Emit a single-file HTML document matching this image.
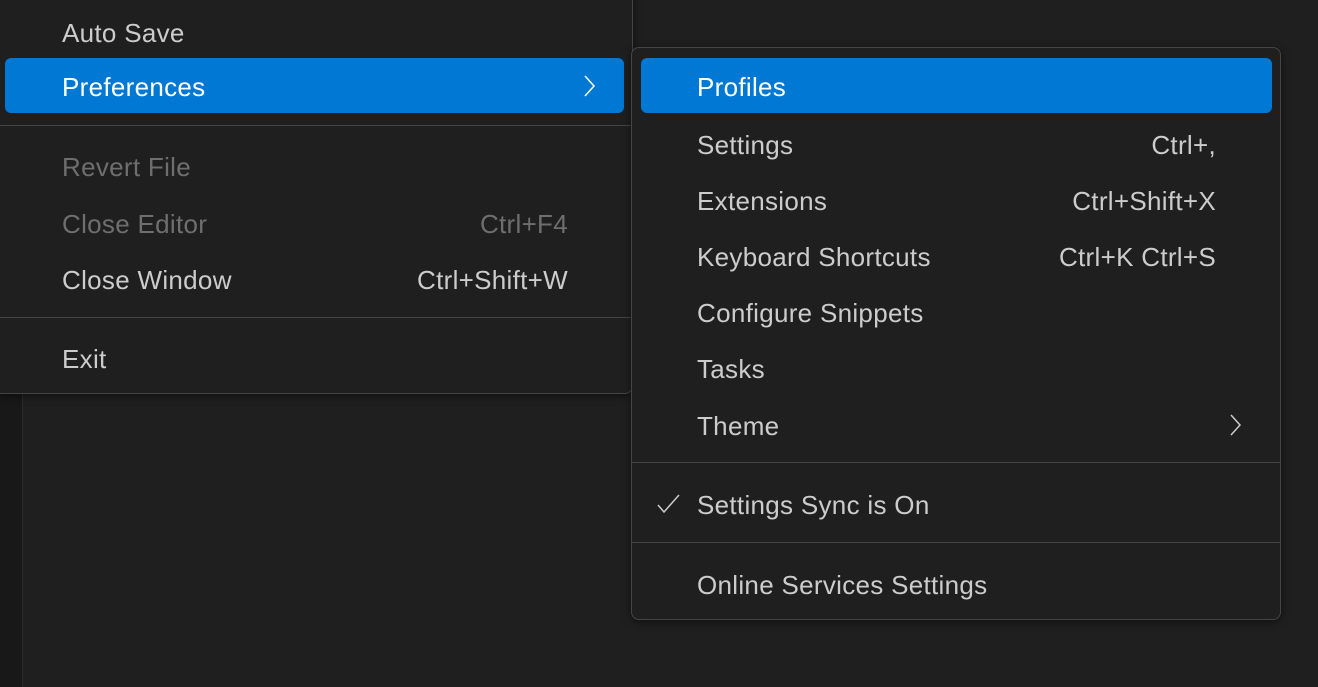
<!DOCTYPE html>
<html><head><style>
body{margin:0;width:1318px;height:687px;background:#1f1f1f;position:relative;overflow:hidden;font-family:"Liberation Sans",sans-serif;font-size:26px;letter-spacing:0.3px;color:#cccccc}
.strip{position:absolute;left:0;top:0;width:22px;height:687px;background:#181818;border-right:1px solid #2b2b2b}
.vline{position:absolute;left:632px;top:0;width:1px;height:50px;background:#454545}
.menu{position:absolute;background:#1f1f1f;border:1px solid #454545;box-shadow:0 2px 8px rgba(0,0,0,.5)}
.it{position:absolute;height:56px;line-height:58px;left:0;right:0}
.it .l{position:absolute}
.it .k{position:absolute;text-align:right}
.hl{position:absolute;background:#0078d4;border-radius:6px;color:#fff}
.sep{position:absolute;left:0;right:0;height:1px;background:#454545}
.dis{color:#6e6e6e}
</style></head><body>
<div class="strip"></div>
<div class="vline"></div>
<div class="menu" style="left:-1px;top:-20px;width:632px;height:413px;border-top:none;border-radius:0 0 8px 0">
 <div class="it" style="top:24px"><span class="l" style="left:62px">Auto Save</span></div>
 <div class="hl" style="left:5px;top:78px;width:619px;height:55px;line-height:58px"><span style="position:absolute;left:57px">Preferences</span>
  <svg style="position:absolute;left:577px;top:16px" width="14" height="24" viewBox="0 0 14 24"><path d="M3 2 L12 12 L3 22" fill="none" stroke="#fff" stroke-width="1.5"/></svg></div>
 <div class="sep" style="top:145px"></div>
 <div class="it dis" style="top:158px"><span class="l" style="left:62px">Revert File</span></div>
 <div class="it dis" style="top:215px"><span class="l" style="left:62px">Close Editor</span><span class="k" style="right:64px">Ctrl+F4</span></div>
 <div class="it" style="top:271px"><span class="l" style="left:62px">Close Window</span><span class="k" style="right:64px">Ctrl+Shift+W</span></div>
 <div class="sep" style="top:337px"></div>
 <div class="it" style="top:350px"><span class="l" style="left:62px">Exit</span></div>
</div>
<div class="menu" style="left:631px;top:47px;width:648px;height:571px;border-radius:8px">
 <div class="hl" style="left:9px;top:10px;width:631px;height:55px;line-height:58px"><span style="position:absolute;left:56px">Profiles</span></div>
 <div class="it" style="top:68px"><span class="l" style="left:65px">Settings</span><span class="k" style="right:64px">Ctrl+,</span></div>
 <div class="it" style="top:124px"><span class="l" style="left:65px">Extensions</span><span class="k" style="right:64px">Ctrl+Shift+X</span></div>
 <div class="it" style="top:180px"><span class="l" style="left:65px">Keyboard Shortcuts</span><span class="k" style="right:64px">Ctrl+K Ctrl+S</span></div>
 <div class="it" style="top:236px"><span class="l" style="left:65px">Configure Snippets</span></div>
 <div class="it" style="top:292px"><span class="l" style="left:65px">Tasks</span></div>
 <div class="it" style="top:349px"><span class="l" style="left:65px">Theme</span>
  <svg style="position:absolute;left:596px;top:16px" width="14" height="24" viewBox="0 0 14 24"><path d="M3 2 L12 12 L3 22" fill="none" stroke="#ccc" stroke-width="1.5"/></svg></div>
 <div class="sep" style="top:414px"></div>
 <div class="it" style="top:428px">
  <svg style="position:absolute;left:24px;top:17px" width="26" height="22" viewBox="0 0 26 22"><path d="M2 12 L8 19 L23 2" fill="none" stroke="#ccc" stroke-width="1.5"/></svg>
  <span class="l" style="left:65px">Settings Sync is On</span></div>
 <div class="sep" style="top:494px"></div>
 <div class="it" style="top:508px"><span class="l" style="left:65px">Online Services Settings</span></div>
</div>
</body></html>
